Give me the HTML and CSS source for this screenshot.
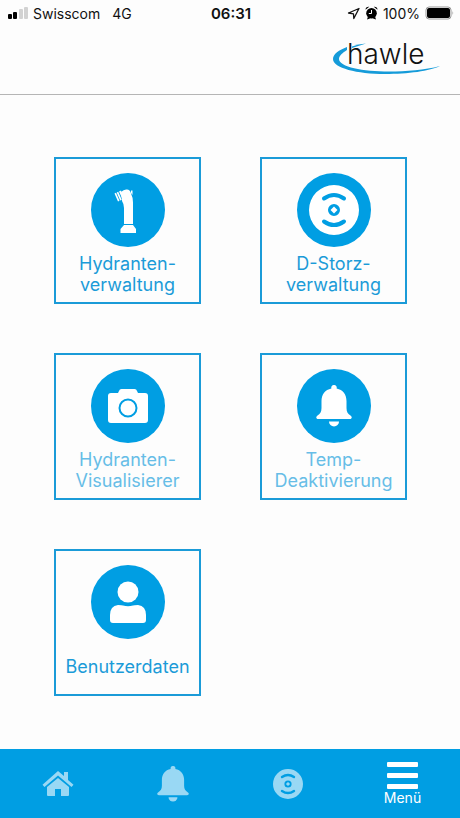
FILE: index.html
```
<!DOCTYPE html>
<html lang="de">
<head>
    <meta charset="UTF-8">
    <meta name="viewport" content="width=device-width, initial-scale=1.0">
    <title>Hawle</title>
    <link rel="stylesheet" href="styles.css">
</head>
<body>
    <!-- shared icons -->
    <svg class="sprite" aria-hidden="true">
        <symbol id="icon-bell" viewBox="0 0 36 42">
            <path d="M18 0a2.6 2.6 0 0 1 2.6 3.4C27 4.7 30.500 9.500 30.500 16v7c0 4 1.500 6 4 7.500 2 1.300 1.500 3.500-.7 3.500H2.200C0 34-.5 31.800 1.500 30.500c2.500-1.500 4-3.500 4-7.500v-7C5.500 9.500 9 4.700 15.400 3.400A2.600 2.600 0 0 1 18 0z"/>
            <path d="M13 36.500h10a5 5 0 0 1-10 0z"/>
        </symbol>
        <symbol id="icon-storz" viewBox="0 0 50 50">
            <path fill-rule="evenodd" d="M25 0a25 25 0 1 0 0 50 25 25 0 1 0 0-50zM25 19a6 6 0 1 1 0 12 6 6 0 1 1 0-12z"/>
            <path d="M25 21.500l3.500 3.500-3.500 3.500-3.500-3.500z"/>
            <g class="storz-lines">
                <path d="M15 13.500q10-7 20 0"/>
                <path d="M15 36.500q10 7 20 0"/>
            </g>
        </symbol>
    </svg>

    <header>
        <div class="status-bar">
            <div class="status-left">
                <svg width="20" height="14" viewBox="0 0 20 14" aria-hidden="true">
                    <rect x="0" y="8" width="4" height="5" rx="1"/>
                    <rect x="5" y="6" width="4" height="7" rx="1"/>
                    <rect class="signal-off" x="11" y="3" width="4" height="10" rx="1"/>
                    <rect class="signal-off" x="16" y="1" width="4" height="12" rx="1"/>
                </svg>
                <span>Swisscom</span>
                <span class="network">4G</span>
            </div>
            <div class="clock">06:31</div>
            <div class="status-right">
                <svg width="13" height="13" viewBox="0 0 13 13" aria-hidden="true">
                    <path class="arrow" d="M12 1.500L1.500 6l5 .8.300 4.700z"/>
                </svg>
                <svg class="alarm" width="13" height="14" viewBox="0 0 13 14" aria-hidden="true">
                    <circle cx="6.500" cy="7.300" r="5.300"/>
                    <path d="M.5 3.800A3 3 0 0 1 4.300.8zM12.500 3.800A3 3 0 0 0 8.700.8zM2 13.500l1-3 2 2zM11 13.500l-1-3-2 2z"/>
                    <path class="alarm-hands" d="M6.500 4v3.500H3.800"/>
                </svg>
                <span>100%</span>
                <svg width="29" height="14" viewBox="0 0 29 14" aria-hidden="true">
                    <rect class="battery" x="1" y="1" width="25" height="12" rx="3"/>
                    <rect x="2" y="2" width="23" height="10" rx="2"/>
                    <path class="battery-tip" d="M27.500 5q1.500 2 0 4z"/>
                </svg>
            </div>
        </div>
        <div class="brand-bar">
            <a class="brand" href="#">
                <svg class="swoosh" width="107" height="34" viewBox="0 0 107 34" aria-hidden="true">
                    <path d="M14 6C6 9 0 13 0 18c0 9 24 15 52 15 23 0 45-3 55-8-15 4-34 5.500-51 5.500C30 30.500 6 26 6 18c0-3 3-6 8-9z"/>
                    <path d="M19 5.500Q25 3 33 2.500L19 7z"/>
                </svg>
                <span>hawle</span>
            </a>
        </div>
    </header>

    <main class="tiles">
        <a class="tile" href="#">
            <svg class="tile-icon" viewBox="0 0 74 74" aria-hidden="true">
                <circle cx="37" cy="37" r="37"/>
                <g class="white">
                    <path d="M30 19q3-3 6-2.500 3 0 4 4 2 4 2 9V51h-9V35q0-4-2-7z"/>
                    <path d="M23.500 20.500l1.500-.7 3.500 8-1.500.7zM25.700 19.500l1.500-.7 3.500 8-1.500.7zM28 18.400l2-1 3 8-1.500.8zM40 17.500h1.500V22L40 20z"/>
                    <path d="M33 52h9l3 4v4H29.500v-4z"/>
                </g>
            </svg>
            <span class="tile-label">Hydranten-<br>verwaltung</span>
        </a>
        <a class="tile" href="#">
            <svg class="tile-icon" viewBox="0 0 74 74" aria-hidden="true">
                <circle cx="37" cy="37" r="37"/>
                <use class="white" href="#icon-storz" x="12" y="12" width="50" height="50"/>
            </svg>
            <span class="tile-label">D-Storz-<br>verwaltung</span>
        </a>
        <a class="tile inactive" href="#">
            <svg class="tile-icon" viewBox="0 0 74 74" aria-hidden="true">
                <circle cx="37" cy="37" r="37"/>
                <path class="white" d="M20 24h7l1-2q.5-2 2.500-2h13q2 0 2.500 2l1 2h7q3 0 3 3v24q0 3-3 3H20q-3 0-3-3V27q0-3 3-3z"/>
                <circle class="lens" cx="37" cy="39" r="8.500"/>
            </svg>
            <span class="tile-label">Hydranten-<br>Visualisierer</span>
        </a>
        <a class="tile inactive" href="#">
            <svg class="tile-icon" viewBox="0 0 74 74" aria-hidden="true">
                <circle cx="37" cy="37" r="37"/>
                <use class="white" href="#icon-bell" x="19" y="16" width="36" height="42"/>
            </svg>
            <span class="tile-label">Temp-<br>Deaktivierung</span>
        </a>
        <a class="tile" href="#">
            <svg class="tile-icon" viewBox="0 0 74 74" aria-hidden="true">
                <circle cx="37" cy="37" r="37"/>
                <circle class="white" cx="37" cy="27" r="10.500"/>
                <path class="white" d="M27 40q4 0 5 .5 5 1.500 10 0 1-.5 5-.5 8 1 8 10v5q0 3-3 3H22q-3 0-3-3v-5q0-9 8-10z"/>
            </svg>
            <span class="tile-label">Benutzerdaten</span>
        </a>
    </main>

    <nav>
        <a href="#" aria-label="Home">
            <svg width="32" height="26" viewBox="0 0 32 26" aria-hidden="true">
                <path d="M16 7L27 16v8q0 1-1 1h-7v-7h-6v7H6q-1 0-1-1v-8z"/>
                <path d="M16 0l6 5V1h4v8l5.500 4.700-2 2.300L16 4.500 2.500 16l-2-2.300z"/>
            </svg>
        </a>
        <a href="#" aria-label="Temp-Deaktivierung">
            <svg width="32" height="36" viewBox="0 0 36 42" preserveAspectRatio="none" aria-hidden="true"><use href="#icon-bell"/></svg>
        </a>
        <a href="#" aria-label="D-Storz-Verwaltung">
            <svg width="30" height="30" viewBox="0 0 50 50" aria-hidden="true"><use href="#icon-storz"/></svg>
        </a>
        <button type="button" class="menu-button">
            <svg width="31" height="27" viewBox="0 0 31 27" aria-hidden="true">
                <rect width="31" height="5" rx="1"/>
                <rect y="11" width="31" height="5" rx="1"/>
                <rect y="22" width="31" height="5" rx="1"/>
            </svg>
            <span>Menü</span>
        </button>
    </nav>
</body>
</html>
```
FILE: styles.css
```
:root {
    --blue: #009ee3;
    --text-blue: #1b9bd8;
}

* {
    box-sizing: border-box;
    margin: 0;
    padding: 0;
}

body {
    min-height: 100vh;
    display: flex;
    flex-direction: column;
    font-family: Inter, 'Liberation Sans', sans-serif;
    background-color: #fdfdfd;
    color: #111;
}

a {
    color: inherit;
    text-decoration: none;
}

svg {
    display: block;
}

.sprite {
    position: absolute;
    width: 0;
    height: 0;
}

header {
    border-bottom: 1px solid #b5b5b5;
}

/* Status bar */
.status-bar {
    display: grid;
    grid-template-columns: 1fr auto 1fr;
    align-items: center;
    height: 26px;
    padding: 0 6px 0 8px;
    font-size: 14px;
}

.status-left,
.status-right {
    display: flex;
    align-items: center;
    gap: 5px;
}

.status-right {
    justify-content: flex-end;
}

.network {
    margin-left: 7px;
}

.clock {
    font-size: 15px;
    font-weight: 600;
}

.signal-off {
    fill: #d2d2d2;
}

.arrow {
    fill: none;
    stroke: #111;
    stroke-width: 1.3;
    stroke-linejoin: round;
}

.alarm-hands {
    fill: none;
    stroke: #fff;
}

.battery {
    fill: none;
    stroke: #999;
}

.battery-tip {
    fill: #999;
}

/* Logo */
.brand-bar {
    display: flex;
    justify-content: flex-end;
    height: 68px;
    padding: 15px 20px 0 0;
}

.brand {
    position: relative;
    width: 107px;
    height: 34px;
    padding-left: 14px;
    font-size: 28px;
    font-weight: 300;
    line-height: 26px;
}

.brand span {
    position: relative;
}

.swoosh {
    position: absolute;
    left: 0;
    top: 0;
    fill: #159bd9;
}

/* Tiles */
.tiles {
    flex: 1;
    display: grid;
    grid-template-columns: 1fr 1fr;
    align-content: start;
    gap: 49px 59px;
    padding: 62px 53px 53px 54px;
}

.tile {
    display: flex;
    flex-direction: column;
    align-items: center;
    gap: 6px;
    aspect-ratio: 1;
    padding-top: 14px;
    border: 2px solid var(--text-blue);
    color: var(--text-blue);
    font-size: 18px;
    line-height: 21px;
    text-align: center;
}

.tile-icon {
    width: 74px;
    height: 74px;
    fill: var(--blue);
}

.tile-icon .white {
    fill: #fff;
}

.tile-label {
    display: flex;
    align-items: center;
    min-height: 42px;
}

.inactive .tile-label {
    color: #67bde7;
}

.storz-lines {
    fill: none;
    stroke: var(--blue);
    stroke-width: 4;
    stroke-linecap: round;
}

.lens {
    fill: #fff;
    stroke: var(--blue);
    stroke-width: 2;
}

/* Bottom navigation */
nav {
    display: grid;
    grid-template-columns: repeat(4, 1fr);
    height: 69px;
    background-color: var(--blue);
}

nav a,
.menu-button {
    display: flex;
    flex-direction: column;
    align-items: center;
    justify-content: center;
}

nav a {
    fill: #99d8f4;
}

.menu-button {
    gap: 1px;
    border: none;
    background: none;
    color: #fff;
    fill: #fff;
    font-family: inherit;
    font-size: 14px;
    line-height: 16px;
    cursor: pointer;
}
```
